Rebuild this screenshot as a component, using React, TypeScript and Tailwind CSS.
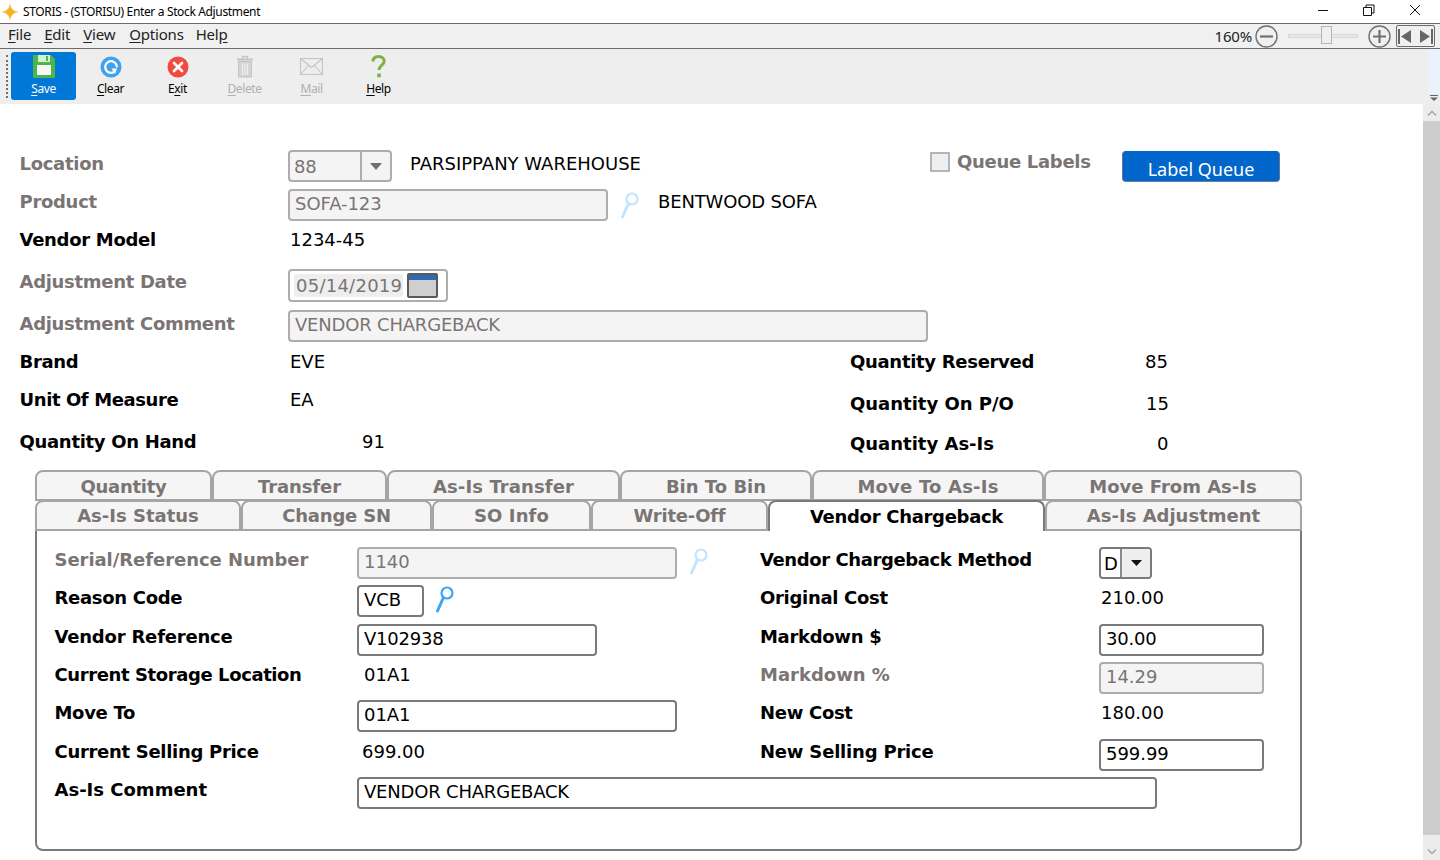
import React from "react";

const F = "font-['DejaVu_Sans',sans-serif]";
const LBL = "h-6 leading-[26px] text-[18px] font-bold whitespace-nowrap";
const VAL = "h-6 leading-[26px] text-[18px] whitespace-nowrap text-black";
const L1 = "-ml-[0.5px] mr-[0.5px]";

function Label({ children, on = true, w, t = "tracking-[-0.3px]" }: { children: React.ReactNode; on?: boolean; w: string; t?: string }) {
  return <div className={`${LBL} ${w} ${t} ${on ? "text-black" : "text-[#7a7574]"}`}>{children}</div>;
}

function Input({ value, w, on = true, t = "tracking-[-0.05px]" }: { value: string; w: string; on?: boolean; t?: string }) {
  return (
    <div
      className={`${w} ${t} h-8 shrink-0 rounded-[4px] border-2 px-[5px] text-[18px] leading-[25px] whitespace-nowrap ${
        on ? "border-[#7a7a7a] bg-white text-black" : "border-[#adadad] bg-[#f4f4f4] text-[#7a7574]"
      }`}
    >
      {value}
    </div>
  );
}

function Lens({ on }: { on: boolean }) {
  return (
    <svg width="20" height="32" viewBox="0 0 20 32" className="shrink-0">
      <circle cx="12" cy="10" r="5.5" fill="none" stroke={on ? "#3aa7f5" : "#c4e4fb"} strokeWidth="2.2" />
      <path d="M8.2 15 L2.5 28" stroke={on ? "#3aa7f5" : "#c4e4fb"} strokeWidth="3" strokeLinecap="round" />
    </svg>
  );
}

function U({ c }: { c: string }) {
  return <span className="underline underline-offset-2">{c}</span>;
}

function Tool({ pre = "", u, post, on = true, active = false, children }: { pre?: string; u: string; post: string; on?: boolean; active?: boolean; children: React.ReactNode }) {
  return (
    <div className={`flex h-12 w-[65px] mr-[2px] shrink-0 flex-col items-center rounded-[3px] ${active ? "bg-[#0078d7] text-white" : on ? "text-black" : "text-[#b0b0b0]"}`}>
      <div className="flex h-[29px] items-center justify-center">{children}</div>
      <div className="font-['Noto_Sans',sans-serif] text-[12px] leading-[16px] tracking-[-0.4px]">
        {pre}
        <U c={u} />
        {post}
      </div>
    </div>
  );
}

function Tab({ t, w, active = false, top = false, tr = "tracking-[-0.3px]" }: { t: string; w: string; active?: boolean; top?: boolean; tr?: string }) {
  const lead = top || active ? "leading-[29px]" : "leading-[27px]";
  return (
    <div
      className={`${w} ${tr} ${lead} h-[31px] shrink-0 rounded-t-[8px] border-2 text-center text-[18px] font-bold whitespace-nowrap ${
        active ? "border-[#7a7a7a] border-b-0 bg-white text-black" : "border-[#a5a5a5] bg-[#f5f5f5] text-[#7a7574]"
      }`}
    >
      {t}
    </div>
  );
}

function PanelRow({ h, left, right }: { h: string; left: React.ReactNode; right: React.ReactNode }) {
  return (
    <div className={`flex ${h} pl-[18px]`}>
      <div className="flex w-[705px] shrink-0">{left}</div>
      <div className="flex">{right}</div>
    </div>
  );
}

export default function App() {
  return (
    <div className={`${F} h-[860px] w-[1440px] overflow-hidden bg-white`}>
      {/* title bar */}
      <div className="flex h-[23px] items-center font-['Noto_Sans',sans-serif] text-[12px] text-black">
        <svg width="16" height="16" viewBox="0 0 16 16" className="ml-[2px] mr-[5px]">
          <path d="M8 0.5 C8.8 4.5 11 6.8 15.5 8 C11 9.2 8.8 11.5 8 15.5 C7.2 11.5 5 9.2 0.5 8 C5 6.8 7.2 4.5 8 0.5Z" fill="#f5b324" stroke="#f8c65c" strokeWidth="0.8" />
        </svg>
        <span className="tracking-[-0.35px]">STORIS - (STORISU) Enter a Stock Adjustment</span>
        <div className="ml-auto flex h-full items-center pb-[3px]">
          <svg width="12" height="12" viewBox="0 0 12 12" className="mr-[34px]"><path d="M1 6.5H11" stroke="#111" strokeWidth="1" /></svg>
          <svg width="12" height="12" viewBox="0 0 12 12" className="mr-[34px]"><path d="M.5 3.5H8.5V11.5H.5ZM3 3.5V1H11V9H8.5" fill="none" stroke="#111" strokeWidth="1" /></svg>
          <svg width="12" height="12" viewBox="0 0 12 12" className="mr-[19px]"><path d="M1 1L11 11M11 1L1 11" stroke="#111" strokeWidth="1" /></svg>
        </div>
      </div>

      {/* menu bar */}
      <div className="flex h-[26px] items-center border-y border-[#6c6c6c] bg-[#f0f0f0] font-['Noto_Sans',sans-serif] text-[15px] text-[#222]">
        <div className="ml-2 -mt-[3px] flex tracking-[-0.2px]">
          <span className="mr-[13px]"><U c="F" />ile</span>
          <span className="mr-[13px]"><U c="E" />dit</span>
          <span className="mr-[14px]"><U c="V" />iew</span>
          <span className="mr-[12px]"><U c="O" />ptions</span>
          <span>Hel<U c="p" /></span>
        </div>
        <div className="ml-auto flex items-center tracking-[-0.2px]">
          <span className="mr-[3px]">160%</span>
          <svg width="23" height="23" viewBox="0 0 23 23" className="mr-[10px]"><circle cx="11.5" cy="11.5" r="10.5" fill="none" stroke="#707070" strokeWidth="1.4" /><path d="M5 11.5H18" stroke="#707070" strokeWidth="2.2" /></svg>
          <div className="relative mr-[10px] h-1 w-[70px] border border-[#d8d8d8] bg-[#e8e8e8]">
            <div className="absolute left-[32px] top-[-9px] h-[18px] w-[11px] border border-[#b5b5b5] bg-[#efefef]" />
          </div>
          <svg width="23" height="23" viewBox="0 0 23 23" className="mr-[5px]"><circle cx="11.5" cy="11.5" r="10.5" fill="none" stroke="#707070" strokeWidth="1.4" /><path d="M5 11.5H18M11.5 5V18" stroke="#707070" strokeWidth="2.2" /></svg>
          <div className="mr-[5px] flex h-[22px] w-[39px] items-center justify-between rounded-[2px] border border-[#6c6c6c] px-[1px]">
            <svg width="15" height="17" viewBox="0 0 15 17"><path d="M1 1V16" stroke="#666" strokeWidth="2" /><path d="M13 2V15L3 8.5Z" fill="#666" /></svg>
            <svg width="15" height="17" viewBox="0 0 15 17"><path d="M14 1V16" stroke="#666" strokeWidth="2" /><path d="M2 2V15L12 8.5Z" fill="#666" /></svg>
          </div>
        </div>
      </div>

      {/* tool bar */}
      <div className="flex h-[55px] items-start bg-[#eeeeee] pt-[3px]">
        <div className="ml-[6px] mr-[3px] mt-[3px] h-[43px] w-[2px] border-l-2 border-dotted border-[#707070]" />
        <Tool u="S" post="ave" active>
          <svg width="22" height="23" viewBox="0 0 22 23"><path d="M0 0H18L22 4V23H0Z" fill="#4cb748" /><rect x="5" y="0" width="12" height="7" fill="#d8efd6" /><rect x="13" y="1" width="2" height="5" fill="#4cb748" /><rect x="4" y="10" width="14" height="10" fill="#f7f7f7" /></svg>
        </Tool>
        <Tool u="C" post="lear">
          <svg width="22" height="22" viewBox="0 0 22 22"><circle cx="11" cy="11" r="10.5" fill="#3ea2ee" /><circle cx="11" cy="11" r="5.8" fill="none" stroke="#fff" strokeWidth="2.2" strokeDasharray="30 7" transform="rotate(60 11 11)" /><path d="M11.5 12.5H17L15 18Z" fill="#fff" /></svg>
        </Tool>
        <Tool pre="E" u="x" post="it">
          <svg width="22" height="22" viewBox="0 0 22 22"><circle cx="11" cy="11" r="10.5" fill="#f04b40" /><path d="M7 7L15 15M15 7L7 15" stroke="#fff" strokeWidth="2.6" strokeLinecap="round" /></svg>
        </Tool>
        <Tool u="D" post="elete" on={false}>
          <svg width="18" height="23" viewBox="0 0 18 23" fill="none" stroke="#c4c4c4"><path d="M1 4.5H17" strokeWidth="2" /><path d="M6.5 4V1.5H11.5V4" strokeWidth="1.4" /><path d="M2.5 6.5H15.5V22H2.5Z" fill="#d4d4d4" strokeWidth="1" /><path d="M6.5 8.5V20M9 8.5V20M11.5 8.5V20" stroke="#f0f0f0" strokeWidth="1.2" /></svg>
        </Tool>
        <Tool u="M" post="ail" on={false}>
          <svg width="23" height="17" viewBox="0 0 23 17" fill="none" stroke="#c4c4c4" strokeWidth="1.1"><rect x=".5" y=".5" width="22" height="16" /><path d="M.5 .5L11.5 9.5L22.5 .5M.5 16.5L8.5 7.5M22.5 16.5L14.5 7.5" /></svg>
        </Tool>
        <Tool u="H" post="elp">
          <svg width="15" height="23" viewBox="0 0 15 23" fill="none"><path d="M2 6.5C2 3 4.5 1.5 7.5 1.5C11 1.5 13.2 3.5 13.2 6.3C13.2 10 8 10.5 8 15" stroke="#7cb342" strokeWidth="3" /><rect x="6.2" y="18.5" width="3.6" height="3.8" fill="#7cb342" /></svg>
        </Tool>
        <div className="ml-auto -mt-[3px] flex w-3 flex-col items-center">
          <div className="h-[45px] w-full bg-[#eaf2fb]" />
          <svg width="8" height="6" viewBox="0 0 8 6" className="mt-px"><path d="M0 .5H8" stroke="#666" /><path d="M0 2.5H8L4 6Z" fill="#666" /></svg>
        </div>
      </div>

      {/* body */}
      <div className="flex h-[756px]">
        <div className="w-[1423px] shrink-0 pl-5 pt-[47px]">
          <div className="flex h-[38px]">
            <Label on={false} w={`w-[268px] ${L1}`}>Location</Label>
            <div className="-mt-px flex h-8 w-[104px] rounded-[4px] border-2 border-[#adadad] bg-[#f4f4f4] text-[18px] leading-[29px] tracking-[-0.2px] text-[#7a7574]">
              <div className="w-[72px] border-r-2 border-[#adadad] pl-[4px]">88</div>
              <div className="flex flex-1 items-center justify-center">
                <svg width="12" height="7" viewBox="0 0 12 7"><path d="M0 0H12L6 7Z" fill="#6f6f6f" /></svg>
              </div>
            </div>
            <div className={`${VAL} ml-[18px] w-[520px]`}>PARSIPPANY WAREHOUSE</div>
            <div className="mt-[1px] h-5 w-5 border-2 border-[#b2b6ba] bg-[#efefef]" />
            <Label on={false} w="ml-[7px] w-[165px] -mt-[2px]">Queue Labels</Label>
            <div className="flex h-[31px] w-[158px] items-center justify-center rounded-[4px] border border-[#0066cc] border-b-[#6c7f93] border-x-[#5c7896] bg-[#0066cc] pt-[5px] font-['Noto_Sans',sans-serif] text-[18px] text-white">Label Queue</div>
          </div>
          <div className="flex h-[38px]">
            <Label on={false} w={`w-[268px] ${L1}`}>Product</Label>
            <Input value="SOFA-123" w="w-[320px]" on={false} />
            <div className="ml-[12px] mr-[18px]"><Lens on={false} /></div>
            <div className={`${VAL} tracking-[-0.15px]`}>BENTWOOD SOFA</div>
          </div>
          <div className="flex h-[42px]">
            <Label w={`w-[270px] ${L1}`}>Vendor Model</Label>
            <div className={VAL}>1234-45</div>
          </div>
          <div className="flex h-[41px]">
            <Label on={false} w={`w-[268px] ${L1}`}>Adjustment Date</Label>
            <div className="flex h-[33px] w-[160px] items-center rounded-[4px] border-2 border-[#adadad] pl-[4px]">
              <div className="h-[23px] w-[109px] rounded-[3px] bg-[#eeeeee] pl-[2px] text-[18px] leading-[23px] tracking-[0.25px] text-[#7a7574]">05/14/2019</div>
              <svg width="31" height="25" viewBox="0 0 31 25" className="ml-[4px]"><rect x="1" y="1" width="29" height="23" rx="1" fill="#cfcfcf" stroke="#5a5a5a" strokeWidth="2" /><rect x="2" y="2" width="27" height="5" fill="#2d6cb0" /></svg>
            </div>
          </div>
          <div className="flex h-[39px]">
            <Label on={false} w={`w-[268px] mt-[1px] ${L1}`}>Adjustment Comment</Label>
            <Input value="VENDOR CHARGEBACK" w="w-[640px]" on={false} t="tracking-[-0.2px]" />
          </div>
          <div className="flex">
            <div className="w-[830px] shrink-0">
              <div className="flex h-[38px]"><Label w={`w-[270px] ${L1}`}>Brand</Label><div className={VAL}>EVE</div></div>
              <div className="flex h-[42px]"><Label w={`w-[270px] ${L1}`} t="tracking-[-0.4px]">Unit Of Measure</Label><div className={VAL}>EA</div></div>
              <div className="flex h-[41px]"><Label w={`w-[342px] ${L1}`}>Quantity On Hand</Label><div className={VAL}>91</div></div>
            </div>
            <div>
              <div className="flex h-[42px]"><Label w="w-[295px]">Quantity Reserved</Label><div className={VAL}>85</div></div>
              <div className="flex h-[40px]"><Label w="w-[296px]" t="tracking-[0px]">Quantity On P/O</Label><div className={VAL}>15</div></div>
              <div className="flex h-[39px]"><Label w="w-[307px]" t="tracking-[0px]">Quantity As-Is</Label><div className={VAL}>0</div></div>
            </div>
          </div>

          {/* tabs */}
          <div className="ml-[15px] w-[1267px]">
            <div className="flex">
              <Tab top t="Quantity" w="w-[177px]" />
              <Tab top t="Transfer" w="w-[175px]" tr="tracking-[-0.1px]" />
              <Tab top t="As-Is Transfer" w="w-[233px]" tr="tracking-[0.1px]" />
              <Tab top t="Bin To Bin" w="w-[192px]" tr="tracking-[0px]" />
              <Tab top t="Move To As-Is" w="w-[232px]" tr="tracking-[0.2px]" />
              <Tab top t="Move From As-Is" w="w-[258px]" tr="tracking-[0px]" />
            </div>
            <div className="-mt-[1px] flex">
              <Tab t="As-Is Status" w="w-[206px]" tr="tracking-[0px]" />
              <Tab t="Change SN" w="w-[191px]" tr="tracking-[-0.2px]" />
              <Tab t="SO Info" w="w-[159px]" tr="tracking-[0.1px]" />
              <Tab t="Write-Off" w="w-[177px]" tr="tracking-[-0.2px]" />
              <Tab t="Vendor Chargeback" w="w-[277px]" active />
              <Tab t="As-Is Adjustment" w="w-[257px]" tr="tracking-[0px]" />
            </div>
            <div className="h-[320px] rounded-b-[8px] border-2 border-t-0 border-[#7a7a7a] pt-[16px]">
              <PanelRow h="h-[38px]" left={<><Label on={false} w={`w-[302px] ${L1}`} t="tracking-[-0.05px]">Serial/Reference Number</Label><Input value="1140" w="w-[320px]" on={false} /><div className="ml-[12px] w-[71px] -mt-[2px]"><Lens on={false} /></div></>}
                right={<><Label w="w-[339px]" t="tracking-[-0.4px]">Vendor Chargeback Method</Label>
                  <div className="flex h-8 w-[53px] overflow-hidden rounded-[4px] border-2 border-[#7a7a7a] text-[18px] leading-[30px] text-black"><div className="w-[21px] border-r-2 border-[#8a8a8a] pl-[3px]">D</div><div className="flex flex-1 items-center justify-center bg-[#eeeeee]"><svg width="11" height="6" viewBox="0 0 11 6"><path d="M0 0H11L5.5 6Z" fill="#111" /></svg></div></div></>} />
              <PanelRow h="h-[39px]" left={<><Label w={`w-[302px] ${L1}`}>Reason Code</Label><Input value="VCB" w="w-[67px]" /><div className="ml-[11px] w-[325px] -mt-[2px]"><Lens on /></div></>}
                right={<><Label w="w-[341px]">Original Cost</Label><div className={VAL}>210.00</div></>} />
              <PanelRow h="h-[38px]" left={<><Label w={`w-[302px] ${L1}`} t="tracking-[-0.2px]">Vendor Reference</Label><Input value="V102938" w="w-[240px]" t="tracking-[-0.2px]" /></>}
                right={<><Label w="w-[339px]">Markdown $</Label><Input value="30.00" w="w-[165px]" t="tracking-[-0.2px]" /></>} />
              <PanelRow h="h-[38px]" left={<><Label w={`w-[309px] ${L1}`} t="tracking-[-0.4px]">Current Storage Location</Label><div className={VAL}>01A1</div></>}
                right={<><Label on={false} w="w-[339px]" t="tracking-[0px]">Markdown %</Label><Input value="14.29" w="w-[165px]" on={false} /></>} />
              <PanelRow h="h-[39px]" left={<><Label w={`w-[302px] ${L1}`}>Move To</Label><Input value="01A1" w="w-[320px]" /></>}
                right={<><Label w="w-[341px]">New Cost</Label><div className={VAL}>180.00</div></>} />
              <PanelRow h="h-[38px]" left={<><Label w={`w-[307px] ${L1}`}>Current Selling Price</Label><div className={VAL}>699.00</div></>}
                right={<><Label w="w-[339px]" t="tracking-[-0.2px]">New Selling Price</Label><Input value="599.99" w="w-[165px]" /></>} />
              <div className="flex pl-[18px]"><Label w={`w-[302px] ${L1}`} t="tracking-[0px]">As-Is Comment</Label><Input value="VENDOR CHARGEBACK" w="w-[800px]" t="tracking-[-0.2px]" /></div>
            </div>
          </div>
        </div>

        {/* scrollbar */}
        <div className="flex w-[17px] flex-col bg-[#ececec]">
          <div className="flex h-[17px] items-center justify-center">
            <svg width="10" height="6" viewBox="0 0 10 6"><path d="M1 5.5L5 1.5L9 5.5" fill="none" stroke="#a3a3a3" strokeWidth="1.3" /></svg>
          </div>
          <div className="h-[714px] bg-[#cdcdcd]" />
          <div className="flex flex-1 items-end justify-center pb-[5px]">
            <svg width="10" height="6" viewBox="0 0 10 6"><path d="M1 .5L5 4.5L9 .5" fill="none" stroke="#a3a3a3" strokeWidth="1.3" /></svg>
          </div>
        </div>
      </div>
    </div>
  );
}
